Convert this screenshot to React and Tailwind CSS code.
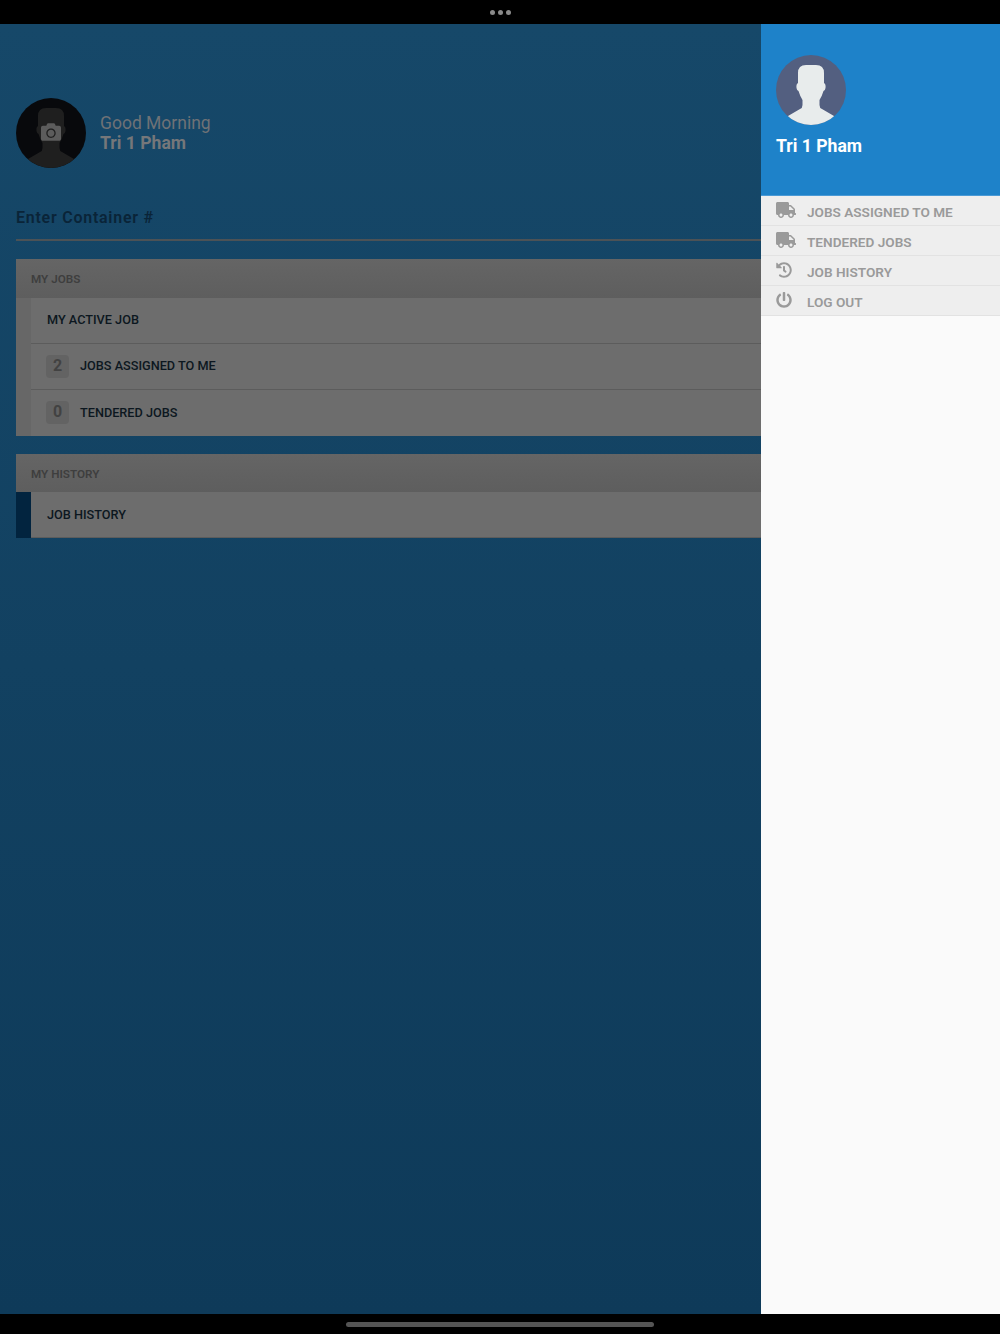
import React from "react";
import { FaTruck, FaHistory, FaPowerOff, FaCamera } from "react-icons/fa";

function Silhouette({ bg, fg }) {
  const id = "clip" + bg.slice(1);
  return (
    <svg viewBox="0 0 70 70" className="w-[70px] h-[70px] shrink-0 block">
      <clipPath id={id}><circle cx="35" cy="35" r="35" /></clipPath>
      <circle cx="35" cy="35" r="35" fill={bg} />
      <path
        clipPath={`url(#${id})`}
        d="M22 18 Q22 10 30 10 H40 Q48 10 48 18 V28 Q50 29 49.5 33 Q49 36 47.5 36 Q46 41 43.5 45 V50 Q43.5 53 46 54 L58 61 V70 H12 V61 L24 54 Q26.5 53 26.5 50 V45 Q24 41 22.5 36 Q21 36 20.5 33 Q20 29 22 28 Z"
        fill={fg}
      />
    </svg>
  );
}

function Row({ count, label, noBorder }) {
  return (
    <div className={"h-[46px] flex items-center bg-[#6d6d6d] pl-[15px] " + (noBorder ? "" : "border-b border-[#5c5c5c]")}>
      {count !== undefined ? (
        <>
          <span className="w-[23px] h-[23px] rounded bg-[#636363] text-[#424242] text-base font-bold flex items-center justify-center pb-px">{count}</span>
          <span className="ml-[11px] text-[12.7px] font-medium text-[#0c1720]">{label}</span>
        </>
      ) : (
        <span className="ml-px text-[12.7px] font-medium text-[#0c1720]">{label}</span>
      )}
    </div>
  );
}

function Card({ title, strip, children, className }) {
  return (
    <div className={"overflow-hidden " + className}>
      <div className="h-[38.5px] flex items-center pl-[15px] pt-1 bg-gradient-to-b from-[#656565] to-[#5e5e5e] text-[11.7px] font-semibold text-[#3e3e3e]">{title}</div>
      <div className={"pl-[15px] " + strip}>{children}</div>
    </div>
  );
}

function MenuItem({ icon, label, iconClass }) {
  return (
    <div className="h-[30px] flex items-center border-b border-[#e2e2e2] pl-[15px]">
      <span className="w-[31px] h-[24px] flex items-center -mt-px text-[#9a9a9a] shrink-0">
        {React.createElement(icon, { className: iconClass })}
      </span>
      <span className="pt-1 text-[13.6px] font-semibold text-[#9a9a9a]">{label}</span>
    </div>
  );
}

export default function App() {
  return (
    <div className="w-[1000px] h-[1334px] flex flex-col bg-black overflow-hidden font-['Roboto',sans-serif]">
      <div className="h-6 flex items-center justify-center gap-[3px] shrink-0">
        <span className="w-[5px] h-[5px] rounded-full bg-[#8a8a8a]" />
        <span className="w-[5px] h-[5px] rounded-full bg-[#8a8a8a]" />
        <span className="w-[5px] h-[5px] rounded-full bg-[#8a8a8a]" />
      </div>

      <div className="flex-1 flex min-h-0">
        <div className="w-[761px] bg-gradient-to-b from-[#164869] to-[#0e3a59] pl-4 pt-[74px]">
          <div className="flex items-center h-[70px]">
            <div className="relative">
              <Silhouette bg="#08090c" fg="#1f1f1f" />
              <FaCamera className="absolute left-[25px] top-[24px] w-[20px] h-[20px] text-[#5c5c5c]" />
            </div>
            <div className="ml-[14px]">
              <div className="text-[17.5px] leading-[20px] text-[#6f7276]">Good Morning</div>
              <div className="text-[17.6px] leading-[20px] font-bold text-[#75777a]">Tri 1 Pham</div>
            </div>
          </div>

          <div className="mt-[38px] h-[35px] border-b-2 border-[#4c5256] text-base font-semibold tracking-[0.75px] text-[#0a2438]">Enter Container #</div>

          <Card title="MY JOBS" strip="bg-[#676767]" className="mt-[18px]">
            <Row label="MY ACTIVE JOB" />
            <Row count="2" label="JOBS ASSIGNED TO ME" />
            <Row count="0" label="TENDERED JOBS" noBorder />
          </Card>

          <Card title="MY HISTORY" strip="bg-[#02243f]" className="mt-[18px]">
            <Row label="JOB HISTORY" />
          </Card>
        </div>

        <div className="w-[239px] bg-[#fafafa]">
          <div className="h-[172px] bg-[#1e82c9] border-b border-[#4a9ad6] pl-[15px] pt-[31px]">
            <Silhouette bg="#535f80" fg="#e8ecec" />
            <div className="mt-[10px] text-[17.6px] leading-[23px] font-bold text-white">Tri 1 Pham</div>
          </div>
          <div className="bg-[#eeeeee]">
            <MenuItem icon={FaTruck} label="JOBS ASSIGNED TO ME" iconClass="w-[20px] h-[20px]" />
            <MenuItem icon={FaTruck} label="TENDERED JOBS" iconClass="w-[20px] h-[20px]" />
            <MenuItem icon={FaHistory} label="JOB HISTORY" iconClass="w-4 h-4" />
            <MenuItem icon={FaPowerOff} label="LOG OUT" iconClass="w-4 h-4" />
          </div>
        </div>
      </div>

      <div className="h-5 flex items-center justify-center shrink-0">
        <span className="w-[308px] h-[5px] rounded-full bg-[#555555]" />
      </div>
    </div>
  );
}
